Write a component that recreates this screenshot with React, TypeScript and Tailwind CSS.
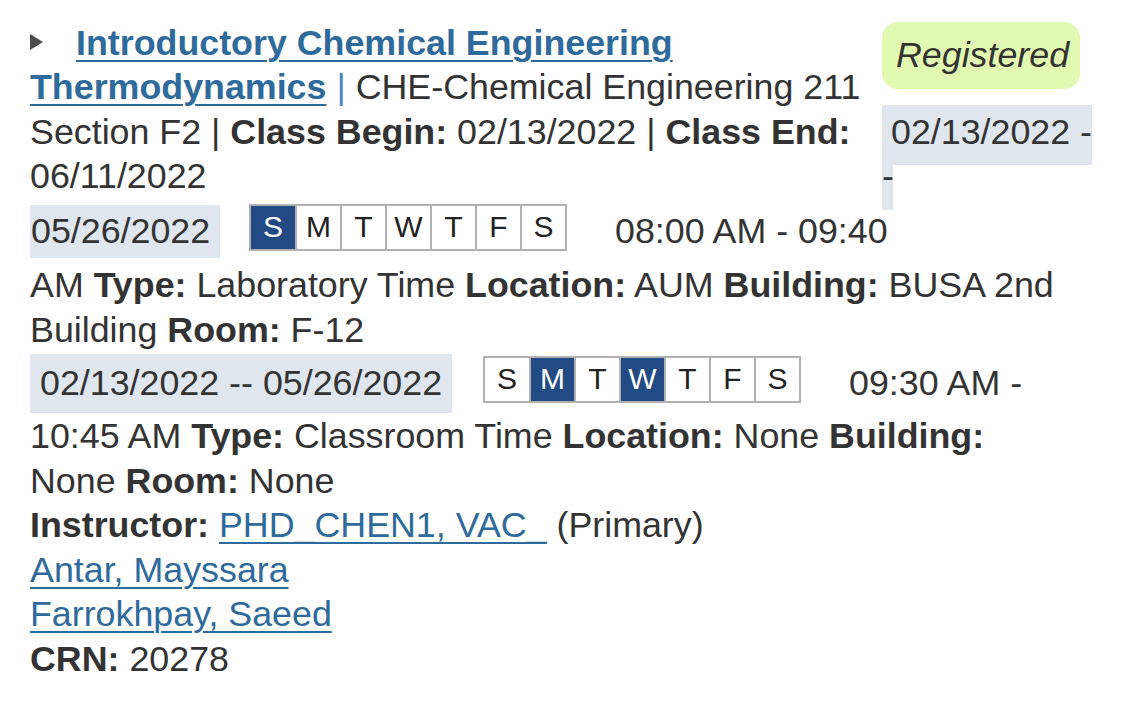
import React from "react";

const LINK = "text-[#2e6a9b] underline underline-offset-[5px]";
const DATEBG = "bg-[#dfe6ee]";

function Days({ sel }: { sel: number[] }) {
  const days = ["S", "M", "T", "W", "T", "F", "S"];
  return (
    <div className="flex border-2 border-[#b1b1b1] bg-white">
      {days.map((d, i) => (
        <div
          key={i}
          className={
            "h-[43px] flex items-center justify-center text-[30px] leading-none " +
            (i > 0 ? "w-[45px] border-l-2 border-[#b1b1b1] " : "w-[44px] ") +
            (sel.includes(i) ? "bg-[#224a84] text-white" : "text-[#222]")
          }
        >
          {d}
        </div>
      ))}
    </div>
  );
}

function Line({ children, className = "" }: { children: React.ReactNode; className?: string }) {
  return <div className={"h-[44.6px] leading-[44.6px] whitespace-nowrap " + className}>{children}</div>;
}

export default function App() {
  return (
    <div className="w-[1125px] h-[703px] bg-white text-[#333] font-['Liberation_Sans',Arial,sans-serif] text-[35.8px] pl-[30px] pt-[20.7px] overflow-hidden">
      <div className="flex items-start h-[178.4px]">
        <div className="w-[852px] shrink-0">
          <Line className="flex items-center">
            <svg width="13" height="16" viewBox="0 0 13 16" className="mr-[33px] -mt-[2px]">
              <polygon points="0,0 13,8 0,16" fill="#4d4d4d" />
            </svg>
            <a className={LINK + " font-bold decoration-2"}>Introductory Chemical Engineering</a>
          </Line>
          <Line>
            <a className={LINK + " font-bold decoration-2"}>Thermodynamics</a>{" "}
            <span className="text-[#4a86c8]">|</span> CHE-Chemical Engineering 211
          </Line>
          <Line>
            Section F2 | <b>Class Begin:</b> 02/13/2022 | <b>Class End:</b>
          </Line>
          <Line>06/11/2022</Line>
        </div>
        <div className="flex flex-col shrink-0">
          <div className="shrink-0 mt-[1.3px] h-[67px] w-[198px] rounded-[16px] bg-[#e1f9b0] flex items-center pl-[14px] italic leading-[44.6px]">
            Registered
          </div>
          <div className={"shrink-0 mt-[16px] h-[60px] w-[210px] pl-[9px] pt-[5.5px] whitespace-nowrap leading-[44.6px] " + DATEBG}>
            02/13/2022 -
          </div>
          <div className={"shrink-0 -mt-[10.5px] h-[55.5px] w-[11px] leading-[44.6px] " + DATEBG}>-</div>
        </div>
      </div>

      <div className="h-[64.4px] flex items-center whitespace-nowrap">
        <div className={"h-[53px] w-[190px] pl-[1px] flex items-center leading-[44.6px] " + DATEBG}>05/26/2022</div>
        <div className="ml-[29px] mb-[8px]">
          <Days sel={[0]} />
        </div>
        <div className="ml-[48px] leading-[44.6px]">08:00 AM - 09:40</div>
      </div>

      <Line>
        AM <b>Type:</b> Laboratory Time <b>Location:</b> AUM <b>Building:</b> BUSA 2nd
      </Line>
      <Line>
        Building <b>Room:</b> F-12
      </Line>

      <div className="h-[61.4px] flex items-center whitespace-nowrap">
        <div className={"h-[59px] w-[422px] pl-[10px] flex items-center leading-[44.6px] " + DATEBG}>
          02/13/2022 -- 05/26/2022
        </div>
        <div className="ml-[31px] mb-[8px]">
          <Days sel={[1, 3]} />
        </div>
        <div className="ml-[48px] leading-[44.6px]">09:30 AM -</div>
      </div>

      <Line>
        10:45 AM <b>Type:</b> Classroom Time <b>Location:</b> None <b>Building:</b>
      </Line>
      <Line>
        None <b>Room:</b> None
      </Line>
      <Line>
        <b>Instructor:</b> <a className={LINK + " decoration-[1.5px]"}>PHD_CHEN1, VAC_</a> (Primary)
      </Line>
      <Line>
        <a className={LINK + " decoration-[1.5px]"}>Antar, Mayssara</a>
      </Line>
      <Line>
        <a className={LINK + " decoration-[1.5px]"}>Farrokhpay, Saeed</a>
      </Line>
      <Line>
        <b>CRN:</b> 20278
      </Line>
    </div>
  );
}
